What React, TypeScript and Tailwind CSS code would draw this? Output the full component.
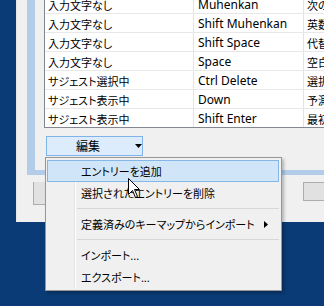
import type { ReactNode } from 'react';

const rows = [
  ['入力文字なし', 'Muhenkan', '次の候補'],
  ['入力文字なし', 'Shift Muhenkan', '英数変換'],
  ['入力文字なし', 'Shift Space', '代替文字'],
  ['入力文字なし', 'Space', '空白を入力'],
  ['サジェスト選択中', 'Ctrl Delete', '選択候補を削除'],
  ['サジェスト表示中', 'Down', '予測候補を選択'],
  ['サジェスト表示中', 'Shift Enter', '最初の候補を確定']
];

function MenuItem({ children, active, arrow }: { children: ReactNode; active?: boolean; arrow?: boolean }) {
  return (
    <div
      className={
        active
          ? 'relative ml-[1px] mr-[2px] flex h-[22px] items-center border border-[#84b6e8] bg-[#d1e5f8] pl-[33px] pt-[1px]'
          : 'relative ml-[1px] mr-[2px] flex h-[22px] items-center border border-transparent pl-[33px] pt-[1px]'
      }
    >
      <span className="text-[11px]">{children}</span>
      {arrow && (
        <svg className="absolute left-[216px] top-[7px]" width="4" height="7" viewBox="0 0 4 7">
          <path d="M0 0 L4 3.5 L0 7 Z" fill="#000" />
        </svg>
      )}
    </div>
  );
}

function Separator() {
  return <div className="ml-[31px] mr-[2px] my-[4px] h-[1px] border-t border-[#d7d7d7]" />;
}

export default function App() {
  return (
    <div className="relative h-[306px] w-[324px] overflow-hidden bg-[#0a3b76] font-['Noto_Sans','Noto_Sans_CJK_JP',sans-serif] text-[12px] leading-none text-black [font-feature-settings:'palt']">
      <div className="ml-[16px] h-[222px] border-l border-[#e6e6e6] bg-[#f0f0f0] pl-[10px]">
        <div className="bg-[#b3cde9] pb-[5px] pl-[8px]">
          <div className="overflow-hidden bg-[#f0f0f0] pb-[14px] pl-[9px]">
            <div className="-mt-[5px] w-[300px] border-b border-l border-[#828790] bg-white">
              {rows.map((r, i) => (
                <div
                  key={i}
                  className={
                    i === rows.length - 1
                      ? 'flex h-[18px] items-center whitespace-nowrap'
                      : 'flex h-[19px] items-center whitespace-nowrap border-b border-[#e8e8e8]'
                  }
                >
                  <div className="flex h-full w-[149px] items-center border-r border-[#e3e3e3] pl-[3px] pt-[2px] text-[11px]">{r[0]}</div>
                  <div className="flex h-full w-[110px] items-center border-r border-[#e3e3e3] pl-[4px] pt-[2px]">{r[1]}</div>
                  <div className="flex h-full flex-1 items-center overflow-hidden pl-[3px] pt-[2px] text-[11px]">{r[2]}</div>
                </div>
              ))}
            </div>
            <div className="ml-[2px] mt-[8px] flex h-[20px] w-[97px] items-center border border-[#7eb4ea] bg-[#dcecfc]">
              <span className="ml-[29px] pt-[1px]">編集</span>
              <svg className="ml-[35px]" width="7" height="4" viewBox="0 0 7 4">
                <path d="M0 0 L7 0 L3.5 4 Z" fill="#000" />
              </svg>
            </div>
          </div>
        </div>
        <div className="mt-[7px] flex justify-between">
          <div className="ml-[6px] h-[23px] w-[30px] border-b border-l border-[#adadad] bg-[#e1e1e1]" />
          <div className="h-[19px] w-[21px] border-y border-l border-[#adadad] bg-[#e1e1e1]" />
        </div>
      </div>

      <div className="absolute left-[45px] top-[157px] h-[134px] w-[237px] border border-[#979797] bg-[#f0f0f0] py-[2px] shadow-[2px_2px_3px_rgba(0,0,0,0.25)]">
        <div className="absolute bottom-[2px] left-[28px] top-[2px] w-[2px] border-l border-r border-l-[#e2e3e3] border-r-white" />
        <MenuItem active>エントリーを追加</MenuItem>
        <MenuItem>選択されたエントリーを削除</MenuItem>
        <Separator />
        <MenuItem arrow>定義済みのキーマップからインポート</MenuItem>
        <Separator />
        <MenuItem>インポート...</MenuItem>
        <MenuItem>エクスポート...</MenuItem>
      </div>

      <svg className="absolute left-[128px] top-[178px]" width="13" height="21" viewBox="0 0 13 21">
        <path d="M0.5 0.5 L0.5 16.5 L4.5 12.5 L7.5 19.5 L9.5 18.5 L6.5 11.5 L11.5 11.5 Z" fill="#fff" stroke="#000" strokeWidth="1" />
      </svg>
    </div>
  );
}
